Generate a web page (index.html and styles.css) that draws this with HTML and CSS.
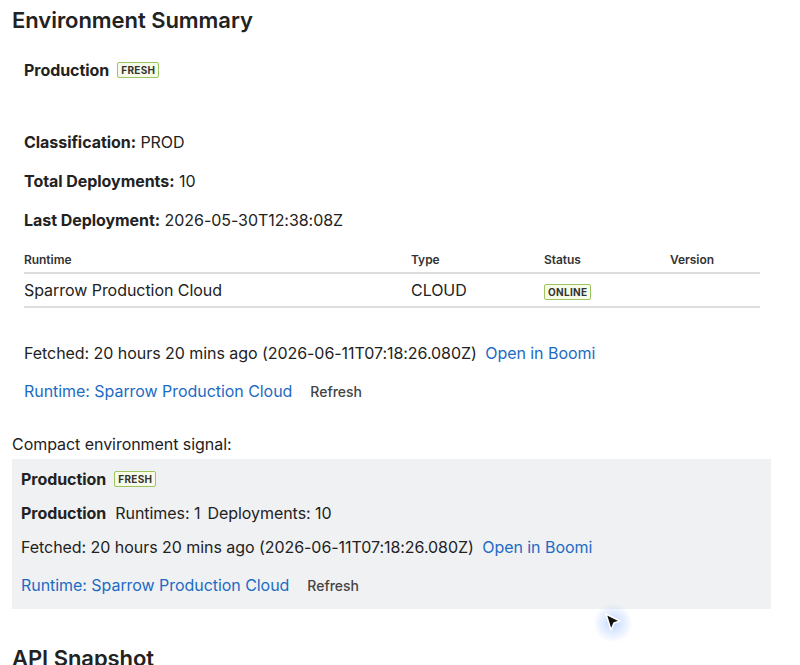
FILE: index.html
```html
<!DOCTYPE html>
<html lang="en">
<head>
    <meta charset="UTF-8">
    <meta name="viewport" content="width=device-width, initial-scale=1.0">
    <title>Environment Summary</title>
    <link rel="stylesheet" href="styles.css">
</head>
<body>
    <h1 class="heading">Environment Summary</h1>
    <div class="summary">
        <div class="title-row">
            <strong class="env-name">Production</strong>
            <span class="badge">FRESH</span>
        </div>
        <p class="fact"><strong>Classification:</strong> PROD</p>
        <p class="fact"><strong>Total Deployments:</strong> 10</p>
        <p class="fact"><strong>Last Deployment:</strong> 2026-05-30T12:38:08Z</p>
        <table class="runtimes">
            <thead>
                <tr>
                    <th class="col-name">Runtime</th>
                    <th class="col-type">Type</th>
                    <th class="col-status">Status</th>
                    <th>Version</th>
                </tr>
            </thead>
            <tbody>
                <tr>
                    <td>Sparrow Production Cloud</td>
                    <td>CLOUD</td>
                    <td><span class="badge">ONLINE</span></td>
                    <td></td>
                </tr>
            </tbody>
        </table>
        <p class="fetched">Fetched: 20 hours 20 mins ago (2026-06-11T07:18:26.080Z) <a href="#" class="link">Open in Boomi</a></p>
        <div class="actions">
            <a href="#" class="link">Runtime: Sparrow Production Cloud</a>
            <button class="refresh">Refresh</button>
        </div>
    </div>

    <p class="compact-label">Compact environment signal:</p>
    <div class="compact">
        <div class="title-row">
            <strong class="env-name">Production</strong>
            <span class="badge">FRESH</span>
        </div>
        <div class="compact-stats">
            <strong>Production</strong>
            <span>Runtimes: 1</span>
            <span>Deployments: 10</span>
        </div>
        <p class="fetched">Fetched: 20 hours 20 mins ago (2026-06-11T07:18:26.080Z) <a href="#" class="link">Open in Boomi</a></p>
        <div class="actions">
            <a href="#" class="link">Runtime: Sparrow Production Cloud</a>
            <button class="refresh">Refresh</button>
        </div>
    </div>

    <h2 class="heading next">API Snapshot</h2>

    <div class="cursor">
        <svg width="20" height="22" viewBox="0 0 20 22">
            <path d="M3 2 L17 9 L11 11 L8 18 Z" fill="#111" stroke="#fff" stroke-width="1.5" stroke-linejoin="round"/>
        </svg>
    </div>
</body>
</html>
```

FILE: styles.css
```css
body {
    margin: 0;
    padding: 6px 12px;
    font-family: 'Inter', 'Liberation Sans', sans-serif;
    font-size: 16px;
    letter-spacing: -0.05px;
    color: #222;
    background: #fff;
}
.heading {
    margin: 0;
    font-size: 22px;
    line-height: 28px;
    font-weight: 600;
    color: #222;
}
.heading.next {
    margin-top: 35px;
}
.summary {
    padding: 0 12px;
}
.title-row {
    display: flex;
    align-items: center;
    gap: 8px;
    margin-top: 24px;
    height: 24px;
}
.env-name {
    font-weight: 700;
}
.badge {
    display: inline-block;
    font-size: 10px;
    line-height: 12px;
    font-weight: 700;
    letter-spacing: 0.3px;
    padding: 1px 3px;
    border: 1px solid #9cc560;
    border-radius: 2px;
    background: #f7fbea;
    color: #333;
}
.fact {
    margin: 0;
    line-height: 23px;
    margin-bottom: 16px;
}
.summary .title-row + .fact {
    margin-top: 49px;
}
.runtimes {
    width: 736px;
    border-collapse: collapse;
    margin-top: 16px;
}
.runtimes th {
    text-align: left;
    font-size: 12px;
    font-weight: 600;
    color: #333;
    padding: 4px 0 5px;
    border-bottom: 2px solid #ddd;
}
.runtimes td {
    padding: 6px 0 6px;
    border-bottom: 2px solid #ddd;
    line-height: 20px;
}
.col-name {
    width: 387px;
}
.col-type {
    width: 133px;
}
.col-status {
    width: 126px;
}
.fetched {
    margin: 33px 0 0;
    line-height: 24px;
}
.link {
    color: #1d6bc4;
    text-decoration: none;
    margin-left: 4px;
}
.actions {
    display: flex;
    align-items: center;
    gap: 18px;
    margin-top: 14px;
    height: 24px;
}
.actions .link {
    margin-left: 0;
}
.refresh {
    font-family: inherit;
    font-size: 14px;
    font-weight: 500;
    color: #444;
    background: none;
    border: none;
    padding: 0;
}
.compact-label {
    margin: 30px 0 0;
    line-height: 22px;
}
.compact {
    background: #f0f1f3;
    margin-top: 4px;
    padding: 8px 9px 12px;
    width: 741px;
}
.compact .title-row {
    margin-top: 0;
}
.compact-stats {
    display: flex;
    gap: 7px;
    margin-top: 10px;
    line-height: 24px;
}
.compact-stats strong {
    margin-right: 2px;
}
.compact .fetched {
    margin-top: 10px;
}
.compact .actions {
    margin-top: 14px;
}
.cursor {
    position: absolute;
    left: 593px;
    top: 603px;
    width: 40px;
    height: 40px;
    display: flex;
    align-items: center;
    justify-content: center;
    border-radius: 50%;
    background: radial-gradient(circle, rgba(120, 170, 255, 0.45), rgba(120, 170, 255, 0) 70%);
}
```
